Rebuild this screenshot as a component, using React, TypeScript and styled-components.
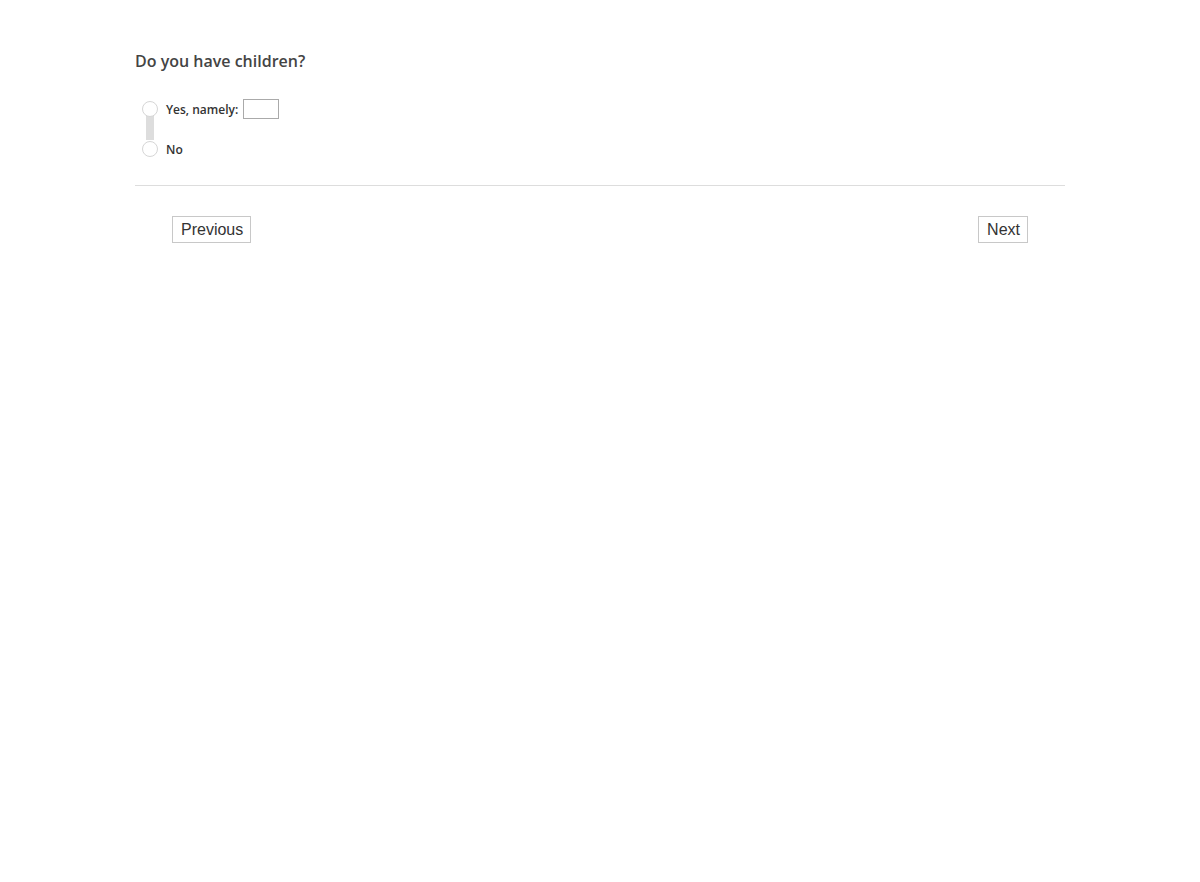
import React from "react";
import styled, { createGlobalStyle } from "styled-components";

const Global = createGlobalStyle`
  html, body { margin: 0; padding: 0; background: #fff; }
  body { font-family: "Open Sans", "Liberation Sans", sans-serif; color: #444; }
`;

const Page = styled.div`
  width: 930px;
  margin: 0 auto;
  padding-top: 50px;
`;

const Question = styled.h2`
  margin: 0;
  font-family: "Open Sans", sans-serif;
  font-weight: 600;
  font-size: 16px;
  line-height: 22px;
  color: #444;
`;

const Options = styled.div`
  position: relative;
  display: flex;
  flex-direction: column;
  gap: 20px;
  margin-top: 27px;
  padding-left: 7px;

  &::before {
    content: "";
    position: absolute;
    left: 11px;
    top: 16px;
    width: 8px;
    height: 25px;
    background: #dddddd;
  }
`;

const Row = styled.label`
  position: relative;
  display: flex;
  align-items: center;
  height: 20px;
  gap: 8px;
`;

const Radio = styled.span`
  box-sizing: border-box;
  width: 16px;
  height: 16px;
  border-radius: 50%;
  border: 1px solid #d6d6d6;
  background: #fff;
  flex: none;
`;

const Label = styled.span`
  font-family: "Open Sans", sans-serif;
  font-weight: 600;
  font-size: 12px;
  color: #333;
  display: flex;
  align-items: center;
  gap: 5px;
`;

const TextBox = styled.input`
  box-sizing: border-box;
  width: 36px;
  height: 20px;
  border: 1px solid #aaa;
  padding: 0;
  margin: 0;
`;

const Divider = styled.hr`
  margin: 26px 0 0;
  border: none;
  border-top: 1px solid #dddddd;
`;

const Nav = styled.div`
  display: flex;
  justify-content: space-between;
  padding: 30px 37px 0;
`;

const NavButton = styled.button`
  font-family: "Liberation Sans", Arial, sans-serif;
  font-size: 16px;
  line-height: 19px;
  color: #333;
  background: #fff;
  border: 1px solid #c8c8c8;
  padding: 3px 7px 3px 8px;
  border-radius: 0;
  cursor: pointer;
`;

export default function App() {
  return (
    <>
      <Global />
      <Page>
        <Question>Do you have children?</Question>
        <Options>
          <Row>
            <Radio />
            <Label>
              Yes, namely: <TextBox type="text" />
            </Label>
          </Row>
          <Row>
            <Radio />
            <Label>No</Label>
          </Row>
        </Options>
        <Divider />
        <Nav>
          <NavButton>Previous</NavButton>
          <NavButton>Next</NavButton>
        </Nav>
      </Page>
    </>
  );
}
